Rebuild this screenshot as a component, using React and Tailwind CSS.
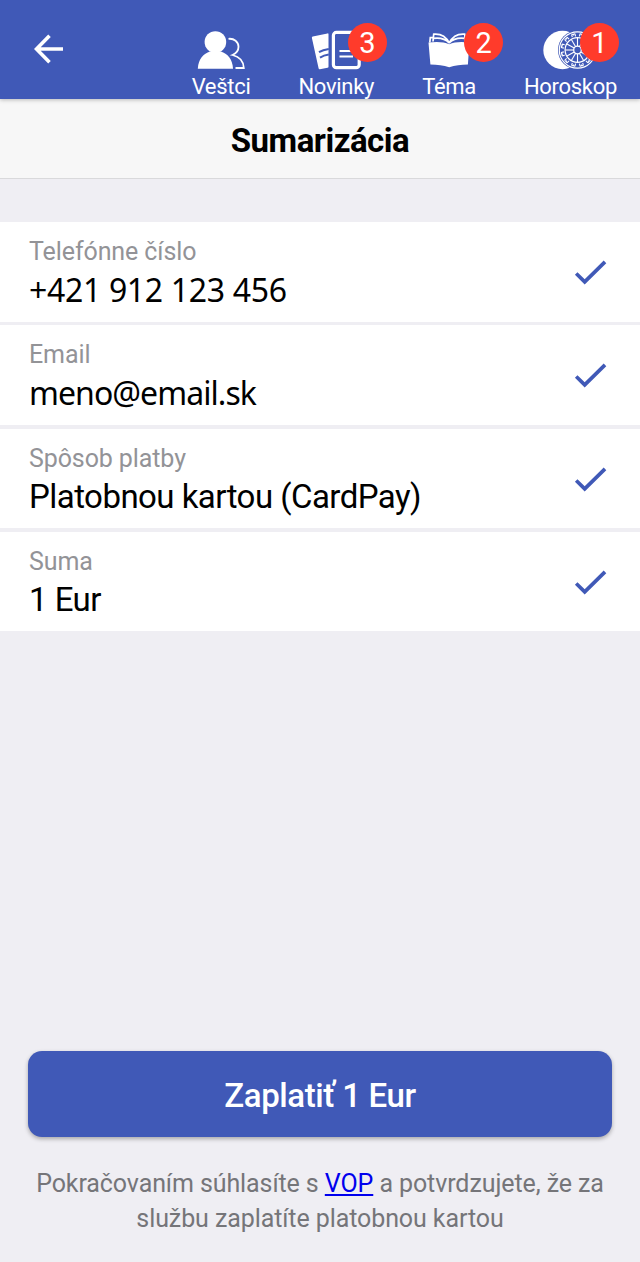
const SPOKES = [0, 30, 60, 90, 120, 150, 180, 210, 240, 270, 300, 330];

function PeopleIcon() {
  return (
    <svg width="56" height="44" viewBox="0 0 56 44" fill="none">
      <circle cx="22.4" cy="14" r="10.8" fill="#fff" />
      <path d="M4.8 40.7C5.3 31 10.5 25.5 17 23.4h10.8C34.5 25.5 39.5 31 40 40.7Z" fill="#fff" />
      <path
        d="M35.5 10.8c5.6-.6 10 3 10 8 0 3.8-2.200 6.600-6 8.200 6.600 1.600 11 6 11.300 13h-8.300"
        stroke="#fff"
        strokeWidth="1.8"
      />
    </svg>
  );
}

function NewsIcon() {
  return (
    <svg width="56" height="44" viewBox="0 0 56 44" fill="none">
      <path d="M4.8 8.600 19.500 5.400Q20.500 5.200 20.500 6.200V38.700Q20.500 39.600 19.500 39.800L11.900 41.200Q10.800 41.400 10.600 40.300L3.900 10Q3.600 8.900 4.800 8.600Z" fill="#fff" />
      <path d="M11 24.200C14 22.300 17 21.500 20.800 21M12 29.700C15 27.700 17.500 27 20.800 26.600" stroke="#4059b7" strokeWidth="2" />
      <rect x="25.400" y="4.400" width="25.800" height="35.300" rx="3" stroke="#fff" strokeWidth="3.200" />
      <path d="M31.500 23H45M31.500 28.500H45" stroke="#fff" strokeWidth="2" />
    </svg>
  );
}

function BookIcon() {
  return (
    <svg width="56" height="44" viewBox="0 0 56 44" fill="none">
      <path d="M7.500 14.600C15 13.500 23 13.800 28.200 16.200 33.500 13.800 41 13.500 48.400 14.600L46.900 36.500C40 36.800 34 37.500 28.200 39.200 22.500 37.500 16.500 36.800 9.400 36.500Z" fill="#fff" />
      <path
        d="M8.800 14.500 9.300 9.600H12M12 13.500 12.700 6.200C19.500 5.600 25 8.500 28.200 15M12.300 10.400C19 9.500 24.500 11 28.200 15M47.600 14.500 47.100 9.600H44.400M44.400 13.500 43.700 6.200C37 5.600 31.500 8.500 28.200 15M44.100 10.400C37.500 9.500 32 11 28.200 15"
        stroke="#fff"
        strokeWidth="1.700"
      />
    </svg>
  );
}

function ZodiacIcon() {
  return (
    <svg width="56" height="44" viewBox="0 0 56 44" fill="none">
      <circle cx="20.500" cy="22" r="19.200" fill="#fff" />
      <circle cx="35.500" cy="22" r="19.500" fill="#4059b7" />
      <circle cx="35.500" cy="22" r="18.200" stroke="#fff" strokeWidth="1.200" />
      <circle cx="35.500" cy="22" r="12.400" stroke="#fff" strokeWidth="1.200" />
      <circle cx="35.500" cy="22" r="3.800" stroke="#fff" strokeWidth="1.300" />
      {SPOKES.map(a => (
        <g key={a} transform={`rotate(${a} 35.5 22)`} stroke="#fff">
          <path d="M35.500 18.200V9.800" strokeWidth="1.100" />
          <path d="M33.800 8.300V5.900q1.700-1 1.700 1 0-2 1.700-1v2.400" strokeWidth="1.100" transform="rotate(15 35.5 22)" />
        </g>
      ))}
    </svg>
  );
}

function Check() {
  return (
    <svg width="34" height="28" viewBox="0 0 34 28" fill="none" stroke="#4059b7" strokeWidth="3.700">
      <path d="M2.200 13.500 10.700 21.800 31 1.900" />
    </svg>
  );
}

const NAV = [
  { label: 'Veštci', icon: PeopleIcon },
  { label: 'Novinky', icon: NewsIcon, badge: 3, badgeCls: 'left-[49.500px]' },
  { label: 'Téma', icon: BookIcon, badge: 2, badgeCls: 'left-[42px]' },
  { label: 'Horoskop', icon: ZodiacIcon, badge: 1, badgeCls: 'left-[56px]' },
];

const ROWS = [
  { label: 'Telefónne číslo', value: '+421 912 123 456', valueCls: 'font-["Noto_Sans",sans-serif] text-[32px] tracking-[-0.33px]' },
  { label: 'Email', value: 'meno@email.sk', valueCls: 'font-["Noto_Sans",sans-serif] text-[32px] tracking-[-0.95px]' },
  { label: 'Spôsob platby', value: 'Platobnou kartou (CardPay)', valueCls: 'text-[33px] tracking-[-0.54px]' },
  { label: 'Suma', value: '1 Eur', valueCls: 'text-[33px] tracking-[-0.54px]' },
];

export default function App() {
  return (
    <div className="flex flex-col h-[1262px] bg-[#efeef3] font-[Roboto,sans-serif]">
      <header className="relative z-10 h-[99px] shrink-0 flex justify-between bg-[#4059b7] text-white pl-[34px] pr-[23px] shadow-[0_1px_4px_rgba(0,0,0,0.25)]">
        <button className="h-full w-8">
          <svg width="30" height="30" viewBox="0 0 30 30" fill="none" stroke="#fff" strokeWidth="3.600" className="-mt-0.5">
            <path d="M15.500 1.800 2.500 15 15.500 28.200M2.500 15H29" />
          </svg>
        </button>
        <nav className="flex gap-12">
          {NAV.map(item => (
            <div key={item.label} className="relative flex flex-col items-center pt-7">
              <div className="w-14 h-11 -mx-4"><item.icon /></div>
              <span className="text-[22px] leading-7 tracking-[-0.3px] pt-px">{item.label}</span>
              {item.badge && (
                <span className={`absolute top-[23px] ${item.badgeCls} w-[39px] h-[39px] rounded-full bg-[#ff3b2b] text-[29px] leading-[41px] text-center`}>
                  {item.badge}
                </span>
              )}
            </div>
          ))}
        </nav>
      </header>

      <div className="h-20 shrink-0 flex items-center justify-center bg-[#f7f7f7] border-b border-[#d9d9db] pt-[5px]">
        <h1 className="text-[33px] leading-10 tracking-[-0.5px] font-bold text-black">Sumarizácia</h1>
      </div>

      <div className="mt-[43.3px] flex flex-col gap-[3.8px]">
        {ROWS.map(row => (
          <div key={row.label} className="h-[99.4px] flex justify-between bg-white pl-[29px] pr-8 pt-[14px]">
            <div>
              <div className="text-[25px] leading-8 tracking-[-0.1px] text-[#939397]">{row.label}</div>
              <div className={`leading-[44px] text-black ${row.valueCls}`}>{row.value}</div>
            </div>
            <div className="pt-6"><Check /></div>
          </div>
        ))}
      </div>

      <footer className="mt-auto px-7 pb-[26px]">
        <button className="w-full h-[86px] rounded-[14px] bg-[#4059b7] text-white text-[33px] tracking-[-0.4px] font-medium pt-[3px] shadow-[0_2px_4px_rgba(0,0,0,0.3)]">
          Zaplatiť 1 Eur
        </button>
        <p className="mt-[29px] text-center text-[25px] leading-[35px] tracking-[-0.09px] text-[#757579]">
          Pokračovaním súhlasíte s <a href="#vop" className="text-[#0000ee] underline">VOP</a> a potvrdzujete, že za<br />
          službu zaplatíte platobnou kartou
        </p>
      </footer>
    </div>
  );
}
